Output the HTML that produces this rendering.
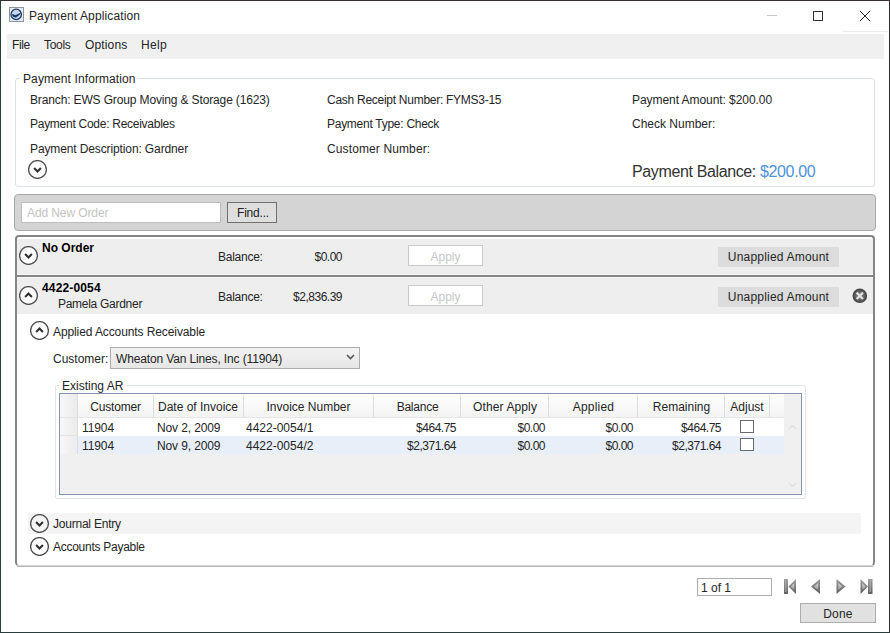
<!DOCTYPE html>
<html><head><meta charset="utf-8">
<style>
*{box-sizing:border-box;margin:0;padding:0}
html,body{width:890px;height:633px;overflow:hidden;background:#fff}
body{position:relative;font-family:"Liberation Sans",sans-serif;font-size:12px;color:#252525}
.a{position:absolute}
.t{position:absolute;white-space:nowrap;line-height:12px;font-size:12px}
.r{text-align:right}
.c{text-align:center}
.n{letter-spacing:-0.5px}
.chev{position:absolute;width:19px;height:19px}
</style></head><body>
<!-- window border -->
<div class="a" style="left:0;top:0;width:890px;height:633px;border-style:solid;border-width:1px;border-color:#3a3030 #352c2c #2b3c3d #2b3c3d"></div>

<!-- title bar -->
<svg class="a" style="left:9px;top:7px" width="15" height="15" viewBox="0 0 15 15">
 <rect x="0.5" y="0.5" width="14" height="14" fill="#e4ecf6" stroke="#8e96a2"/>
 <circle cx="7.2" cy="7.4" r="5.2" fill="#c4d6ee" stroke="#1e3a62" stroke-width="1.3"/>
 <path d="M2.6 7.4 Q4.5 7 6.2 8.2 Q9 6.8 12.2 5.4 Q10.5 8.6 7 10.6 Q4.2 10.4 2.6 7.4 Z" fill="#12305a"/>
</svg>
<div class="t" style="left:29px;top:10px;letter-spacing:0.12px">Payment Application</div>
<div class="a" style="left:767px;top:15px;width:10px;height:1px;background:#cacaca"></div>
<div class="a" style="left:842px;top:31px;width:46px;height:1px;background:#ececec"></div>
<div class="a" style="left:813px;top:11px;width:10px;height:10px;border:1px solid #333"></div>
<svg class="a" style="left:859px;top:10px" width="12" height="12" viewBox="0 0 12 12">
 <path d="M0.8 0.8 L11.2 11.2 M11.2 0.8 L0.8 11.2" stroke="#222" stroke-width="1"/>
</svg>

<!-- menu bar -->
<div class="a" style="left:7px;top:34px;width:877px;height:25px;background:#f0f0f0"></div>
<div class="t" style="left:12px;top:39px;letter-spacing:-0.4px">File</div>
<div class="t" style="left:44px;top:39px;letter-spacing:-0.3px">Tools</div>
<div class="t" style="left:85px;top:39px;letter-spacing:0.15px">Options</div>
<div class="t" style="left:141px;top:39px;letter-spacing:0.3px">Help</div>

<!-- payment information group -->
<div class="a" style="left:15px;top:78px;width:860px;height:109px;border:1px solid #dce1e5;border-radius:3px"></div>
<div class="a" style="left:20px;top:72px;width:117px;height:12px;background:#fff"></div>
<div class="t" style="left:23px;top:73px;letter-spacing:0.1px">Payment Information</div>
<div class="t" style="left:30px;top:94px;letter-spacing:-0.14px">Branch: EWS Group Moving &amp; Storage (1623)</div>
<div class="t" style="left:30px;top:118px;letter-spacing:-0.27px">Payment Code: Receivables</div>
<div class="t" style="left:30px;top:143px;letter-spacing:-0.12px">Payment Description: Gardner</div>
<div class="t" style="left:327px;top:94px;letter-spacing:-0.27px">Cash Receipt Number: FYMS3-15</div>
<div class="t" style="left:327px;top:118px;letter-spacing:-0.27px">Payment Type: Check</div>
<div class="t" style="left:327px;top:143px;letter-spacing:0.12px">Customer Number:</div>
<div class="t" style="left:632px;top:94px;letter-spacing:-0.06px">Payment Amount: $200.00</div>
<div class="t" style="left:632px;top:118px">Check Number:</div>
<div class="t" style="left:632px;top:164px;font-size:16px;line-height:16px;letter-spacing:-0.37px;color:#333">Payment Balance: <span style="color:#4d92de">$200.00</span></div>
<svg class="chev" style="left:28px;top:160px" viewBox="0 0 19 19"><circle cx="9.5" cy="9.5" r="8.9" fill="none" stroke="#505050" stroke-width="1.35"/><path d="M6.1 8.1 L9.5 11.4 L12.9 8.1" fill="none" stroke="#303030" stroke-width="2.15"/></svg>

<!-- add new order bar -->
<div class="a" style="left:14px;top:194px;width:862px;height:37px;background:#d4d4d4;border:1px solid #a9a9a9;border-radius:4px"></div>
<div class="a" style="left:21px;top:202px;width:200px;height:21px;background:#fff;border:1px solid #bdbdbd"></div>
<div class="t" style="left:27px;top:207px;color:#c3c3c3;letter-spacing:-0.1px">Add New Order</div>
<div class="a" style="left:227px;top:202px;width:50px;height:21px;background:#dedede;border:1px solid #707070"></div>
<div class="t" style="left:237px;top:207px;letter-spacing:-0.2px">Find...</div>

<!-- orders container -->
<div class="a" style="left:15px;top:235px;width:860px;height:331px;border:2px solid #868686;border-bottom:1px solid #b4b4b4;border-radius:4px;background:#fff"></div>
<div class="a" style="left:17px;top:566px;width:856px;height:1px;background:#b8b8b8"></div>
<div class="a" style="left:16px;top:565px;width:858px;height:1px;background:#d4d4d4"></div>
<div class="a" style="left:17px;top:239px;width:856px;height:36px;background:#eeeeee;border-bottom:1px solid #f6f6f6"></div>
<div class="a" style="left:17px;top:275px;width:856px;height:2px;background:#878787"></div>
<div class="a" style="left:17px;top:277px;width:856px;height:37px;background:#eeeeee;border-top:1px solid #f6f6f6"></div>

<!-- order 1 -->
<svg class="chev" style="left:19px;top:246px" viewBox="0 0 19 19"><circle cx="9.5" cy="9.5" r="8.9" fill="#fff" stroke="#505050" stroke-width="1.35"/><path d="M6.1 8.1 L9.5 11.4 L12.9 8.1" fill="none" stroke="#303030" stroke-width="2.15"/></svg>
<div class="t" style="left:42px;top:242px;font-weight:bold;color:#000">No Order</div>
<div class="t" style="left:218px;top:251px;letter-spacing:-0.26px">Balance:</div>
<div class="t r n" style="left:262px;top:251px;width:80px">$0.00</div>
<div class="a" style="left:408px;top:245px;width:75px;height:21px;background:#fff;border:1px solid #c9c9c9"></div>
<div class="t c" style="left:408px;top:251px;width:75px;color:#c6c6c6">Apply</div>
<div class="a" style="left:718px;top:247px;width:121px;height:20px;background:#dcdcdc"></div>
<div class="t c" style="left:718px;top:251px;width:121px;letter-spacing:0.2px">Unapplied Amount</div>

<!-- order 2 -->
<svg class="chev" style="left:19px;top:286px" viewBox="0 0 19 19"><circle cx="9.5" cy="9.5" r="8.9" fill="#fff" stroke="#505050" stroke-width="1.35"/><path d="M6.1 10.9 L9.5 7.6 L12.9 10.9" fill="none" stroke="#303030" stroke-width="2.15"/></svg>
<div class="t" style="left:42px;top:282px;font-weight:bold;color:#000;letter-spacing:0.15px">4422-0054</div>
<div class="t" style="left:58px;top:298px;letter-spacing:-0.28px">Pamela Gardner</div>
<div class="t" style="left:218px;top:291px;letter-spacing:-0.26px">Balance:</div>
<div class="t r n" style="left:262px;top:291px;width:80px">$2,836.39</div>
<div class="a" style="left:408px;top:285px;width:75px;height:21px;background:#fff;border:1px solid #c9c9c9"></div>
<div class="t c" style="left:408px;top:291px;width:75px;color:#c6c6c6">Apply</div>
<div class="a" style="left:718px;top:287px;width:121px;height:20px;background:#dcdcdc"></div>
<div class="t c" style="left:718px;top:291px;width:121px;letter-spacing:0.2px">Unapplied Amount</div>
<svg class="a" style="left:852px;top:288px" width="16" height="16" viewBox="0 0 16 16"><defs><radialGradient id="xg"><stop offset="0.5" stop-color="#6a6a6a"/><stop offset="1" stop-color="#3e3e3e"/></radialGradient></defs><circle cx="7.8" cy="7.8" r="7.3" fill="url(#xg)"/><path d="M4.6 4.6 L11 11 M11 4.6 L4.6 11" stroke="#e2e2e2" stroke-width="2.2"/></svg>

<!-- applied AR -->
<svg class="chev" style="left:30px;top:321px" viewBox="0 0 19 19"><circle cx="9.5" cy="9.5" r="8.9" fill="none" stroke="#505050" stroke-width="1.35"/><path d="M6.1 10.9 L9.5 7.6 L12.9 10.9" fill="none" stroke="#303030" stroke-width="2.15"/></svg>
<div class="t" style="left:53px;top:326px;letter-spacing:-0.1px">Applied Accounts Receivable</div>
<div class="t" style="left:53px;top:353px">Customer:</div>
<div class="a" style="left:110px;top:347px;width:250px;height:22px;border:1px solid #acacac;background:linear-gradient(#f2f2f2,#e6e6e6)"></div>
<div class="t" style="left:116px;top:353px;letter-spacing:-0.14px">Wheaton Van Lines, Inc (11904)</div>
<svg class="a" style="left:346px;top:354px" width="9" height="6" viewBox="0 0 9 6"><path d="M1 1 L4.5 4.5 L8 1" fill="none" stroke="#555" stroke-width="1.6"/></svg>

<!-- existing AR group -->
<div class="a" style="left:55px;top:385px;width:751px;height:114px;border:1px solid #e0e5ea;border-radius:2px"></div>
<div class="a" style="left:59px;top:379px;width:67px;height:12px;background:#fff"></div>
<div class="t" style="left:62px;top:380px">Existing AR</div>

<!-- grid -->
<div class="a" style="left:59px;top:393px;width:743px;height:102px;border:1px solid #8496ad;background:#f0f0f0"></div>
<div class="a" style="left:60px;top:394px;width:724px;height:24px;background:linear-gradient(#ffffff,#f3f3f3);border-bottom:1px solid #e6e6e6"></div>
<div class="a" style="left:60px;top:394px;width:18px;height:60px;background:linear-gradient(90deg,#f7f7f7,#ebebeb)"></div>
<div class="a" style="left:60px;top:417px;width:18px;height:1px;background:#e2e2e2"></div>
<div class="a" style="left:60px;top:435px;width:18px;height:1px;background:#e2e2e2"></div>
<div class="a" style="left:78px;top:418px;width:706px;height:18px;background:#fff"></div>
<div class="a" style="left:78px;top:436px;width:706px;height:18px;background:#e9eff8"></div>
<div class="a" style="left:77px;top:394px;width:1px;height:60px;background:#dedede"></div>
<!-- separators -->
<div class="a" style="left:153px;top:395px;width:1px;height:22px;background:#dcdcdc"></div>
<div class="a" style="left:243px;top:395px;width:1px;height:22px;background:#dcdcdc"></div>
<div class="a" style="left:373px;top:395px;width:1px;height:22px;background:#dcdcdc"></div>
<div class="a" style="left:460px;top:395px;width:1px;height:22px;background:#dcdcdc"></div>
<div class="a" style="left:548px;top:395px;width:1px;height:22px;background:#dcdcdc"></div>
<div class="a" style="left:637px;top:395px;width:1px;height:22px;background:#dcdcdc"></div>
<div class="a" style="left:724px;top:395px;width:1px;height:22px;background:#dcdcdc"></div>
<div class="a" style="left:769px;top:395px;width:1px;height:22px;background:#dcdcdc"></div>
<div class="a" style="left:784px;top:394px;width:17px;height:100px;background:#f0f0f0"></div>
<svg class="a" style="left:788px;top:424px" width="9" height="6" viewBox="0 0 9 6"><path d="M1 5 L4.5 1.5 L8 5" fill="none" stroke="#dedede" stroke-width="1.1"/></svg>
<svg class="a" style="left:788px;top:482px" width="9" height="6" viewBox="0 0 9 6"><path d="M1 1 L4.5 4.5 L8 1" fill="none" stroke="#dedede" stroke-width="1.1"/></svg>
<!-- header texts -->
<div class="t c" style="left:78px;top:401px;width:75px;letter-spacing:-0.17px">Customer</div>
<div class="t c" style="left:153px;top:401px;width:90px">Date of Invoice</div>
<div class="t c" style="left:243px;top:401px;width:131px">Invoice Number</div>
<div class="t c" style="left:374px;top:401px;width:87px;letter-spacing:-0.25px">Balance</div>
<div class="t c" style="left:461px;top:401px;width:88px;letter-spacing:0.12px">Other Apply</div>
<div class="t c" style="left:549px;top:401px;width:89px;letter-spacing:0.2px">Applied</div>
<div class="t c" style="left:638px;top:401px;width:87px">Remaining</div>
<div class="t c" style="left:725px;top:401px;width:44px">Adjust</div>
<!-- row 1 -->
<div class="t" style="left:82px;top:422px;letter-spacing:-0.1px">11904</div>
<div class="t" style="left:157px;top:422px;letter-spacing:-0.12px">Nov 2, 2009</div>
<div class="t" style="left:246px;top:422px">4422-0054/1</div>
<div class="t r n" style="left:376px;top:422px;width:80px">$464.75</div>
<div class="t r n" style="left:465px;top:422px;width:80px">$0.00</div>
<div class="t r n" style="left:553px;top:422px;width:80px">$0.00</div>
<div class="t r n" style="left:641px;top:422px;width:80px">$464.75</div>
<div class="a" style="left:740px;top:420px;width:14px;height:13px;border:1px solid #6a6a6a;background:#fff"></div>
<!-- row 2 -->
<div class="t" style="left:82px;top:440px;letter-spacing:-0.1px">11904</div>
<div class="t" style="left:157px;top:440px;letter-spacing:-0.12px">Nov 9, 2009</div>
<div class="t" style="left:246px;top:440px">4422-0054/2</div>
<div class="t r n" style="left:376px;top:440px;width:80px">$2,371.64</div>
<div class="t r n" style="left:465px;top:440px;width:80px">$0.00</div>
<div class="t r n" style="left:553px;top:440px;width:80px">$0.00</div>
<div class="t r n" style="left:641px;top:440px;width:80px">$2,371.64</div>
<div class="a" style="left:740px;top:438px;width:14px;height:13px;border:1px solid #6a6a6a;background:#fff"></div>

<!-- journal entry / accounts payable -->
<div class="a" style="left:28px;top:513px;width:833px;height:21px;background:#f4f4f4"></div>
<svg class="chev" style="left:30px;top:514px" viewBox="0 0 19 19"><circle cx="9.5" cy="9.5" r="8.9" fill="none" stroke="#505050" stroke-width="1.35"/><path d="M6.1 8.1 L9.5 11.4 L12.9 8.1" fill="none" stroke="#303030" stroke-width="2.15"/></svg>
<div class="t" style="left:53px;top:518px;letter-spacing:-0.22px">Journal Entry</div>
<svg class="chev" style="left:30px;top:537px" viewBox="0 0 19 19"><circle cx="9.5" cy="9.5" r="8.9" fill="none" stroke="#505050" stroke-width="1.35"/><path d="M6.1 8.1 L9.5 11.4 L12.9 8.1" fill="none" stroke="#303030" stroke-width="2.15"/></svg>
<div class="t" style="left:53px;top:541px;letter-spacing:-0.27px">Accounts Payable</div>

<!-- pager -->
<div class="a" style="left:697px;top:578px;width:75px;height:18px;border:1px solid #abadb3;background:#fff"></div>
<div class="t" style="left:701px;top:582px">1 of 1</div>
<svg class="a" style="left:783px;top:578px" width="92" height="17" viewBox="0 0 92 17">
 <defs><linearGradient id="g" x1="0" y1="0" x2="0" y2="1"><stop offset="0" stop-color="#a0a0a0"/><stop offset="1" stop-color="#5e5e5e"/></linearGradient>
 <linearGradient id="g2" x1="0" y1="0" x2="0" y2="1"><stop offset="0" stop-color="#d8d8d8"/><stop offset="1" stop-color="#9a9a9a"/></linearGradient></defs>
 <rect x="1" y="1" width="4" height="15" fill="url(#g)"/><rect x="2" y="2" width="1.5" height="12" fill="#b4b4b4" opacity="0.6"/><path d="M13 1 L5.5 8.5 L13 16 Z" fill="url(#g)"/><path d="M11.2 5 L7.8 8.5 L11.2 12 Z" fill="url(#g2)"/>
 <path d="M37 1 L28 8.5 L37 16 Z" fill="url(#g)"/><path d="M35.2 5 L31 8.5 L35.2 12 Z" fill="url(#g2)"/>
 <path d="M53.5 1 L62.5 8.5 L53.5 16 Z" fill="url(#g)"/><path d="M55.3 5 L59.5 8.5 L55.3 12 Z" fill="url(#g2)"/>
 <path d="M77.5 1 L85 8.5 L77.5 16 Z" fill="url(#g)"/><path d="M79.3 5 L82.7 8.5 L79.3 12 Z" fill="url(#g2)"/><rect x="85" y="1" width="4.5" height="15" fill="url(#g)"/><rect x="86.5" y="2" width="1.5" height="12" fill="#b4b4b4" opacity="0.6"/>
</svg>
<div class="a" style="left:800px;top:603px;width:76px;height:20px;background:#e1e1e1;border:1px solid #adadad"></div>
<div class="t c" style="left:800px;top:608px;width:76px;letter-spacing:0.2px">Done</div>
</body></html>
